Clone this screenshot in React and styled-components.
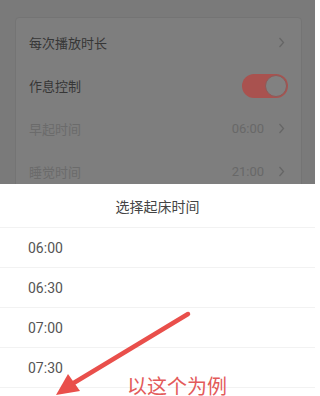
import React from "react";
import styled, { createGlobalStyle } from "styled-components";

const GlobalStyle = createGlobalStyle`
  html, body {
    margin: 0;
    padding: 0;
    background: #ffffff;
  }
  body {
    font-family: Roboto, "Noto Sans CJK SC", sans-serif;
  }
`;

const settings = [
  { label: "每次播放时长", chevron: true },
  { label: "作息控制", toggle: true },
  { label: "早起时间", value: "06:00", chevron: true, dim: true },
  { label: "睡觉时间", value: "21:00", chevron: true, dim: true },
];

const times = ["06:00", "06:30", "07:00", "07:30"];

function Chevron() {
  return (
    <svg width="7" height="11" viewBox="0 0 7 11">
      <polyline points="1.5,1 5.5,5.5 1.5,10" fill="none" stroke="#666666" strokeWidth="1.3" />
    </svg>
  );
}

export default function App() {
  return (
    <Screen>
      <GlobalStyle />
      <Backdrop>
        <Card>
          {settings.map((s) => (
            <Row key={s.label}>
              <Label $dim={s.dim}>{s.label}</Label>
              <Right>
                {s.value && <Value>{s.value}</Value>}
                {s.chevron && <Chevron />}
                {s.toggle && (
                  <Toggle>
                    <Knob />
                  </Toggle>
                )}
              </Right>
            </Row>
          ))}
        </Card>
      </Backdrop>
      <Sheet>
        <SheetTitle>选择起床时间</SheetTitle>
        {times.map((t) => (
          <TimeRow key={t}>{t}</TimeRow>
        ))}
      </Sheet>
      <Arrow width="320" height="396" viewBox="0 0 320 396">
        <line x1="188" y1="314" x2="72" y2="384" stroke="#e94f4b" strokeWidth="4.5" strokeLinecap="round" />
        <polygon points="56,395 68,374 80,391" fill="#e94f4b" />
      </Arrow>
      <Note>以这个为例</Note>
    </Screen>
  );
}

const Screen = styled.div`
  position: relative;
  width: 320px;
  height: 396px;
  overflow: hidden;
  display: flex;
  flex-direction: column;
  background-color: #ffffff;
`;

const Backdrop = styled.div`
  width: 315px;
  height: 184px;
  flex-shrink: 0;
  box-sizing: border-box;
  padding: 17px 13px 0 15px;
  background-color: #7a7a7a;
  overflow: hidden;
`;

const Card = styled.div`
  background-color: #7e7e7e;
  border: 1px solid #747474;
  border-radius: 4px;
  padding: 3px 16px 0 13px;
  display: flex;
  flex-direction: column;
`;

const Row = styled.div`
  height: 43px;
  display: flex;
  align-items: center;
  justify-content: space-between;
`;

const Label = styled.span`
  font-family: "Noto Sans CJK SC", sans-serif;
  font-size: 13px;
  color: ${(p) => (p.$dim ? "#6b6b6b" : "#363636")};
`;

const Right = styled.div`
  display: flex;
  align-items: center;
  gap: 14px;
`;

const Value = styled.span`
  font-family: Roboto, sans-serif;
  font-size: 13px;
  color: #686868;
`;

const Toggle = styled.div`
  width: 46px;
  height: 24px;
  border-radius: 12px;
  background-color: #a9524f;
  display: flex;
  align-items: center;
  justify-content: flex-end;
  padding: 0 1px;
  box-sizing: border-box;
  margin-right: -3px;
`;

const Knob = styled.div`
  width: 20px;
  height: 20px;
  border-radius: 50%;
  background-color: #818181;
  border: 1px solid #8e5a58;
`;

const Sheet = styled.div`
  width: 315px;
  background-color: #ffffff;
  display: flex;
  flex-direction: column;
`;

const SheetTitle = styled.div`
  height: 44px;
  display: flex;
  align-items: center;
  justify-content: center;
  border-bottom: 1px solid #f2f2f2;
  box-sizing: border-box;
  font-family: "Noto Sans CJK SC", sans-serif;
  font-size: 14px;
  color: #444444;
`;

const TimeRow = styled.div`
  height: 40px;
  box-sizing: border-box;
  display: flex;
  align-items: center;
  padding-left: 28px;
  border-bottom: 1px solid #f2f2f2;
  font-family: Roboto, sans-serif;
  font-size: 14px;
  color: #555555;
`;

const Arrow = styled.svg`
  position: absolute;
  left: 0;
  top: 0;
  pointer-events: none;
`;

const Note = styled.div`
  position: absolute;
  left: 127px;
  top: 372px;
  font-family: "Noto Sans CJK SC", sans-serif;
  font-size: 20px;
  line-height: 28px;
  color: #e35a5a;
  white-space: nowrap;
`;
